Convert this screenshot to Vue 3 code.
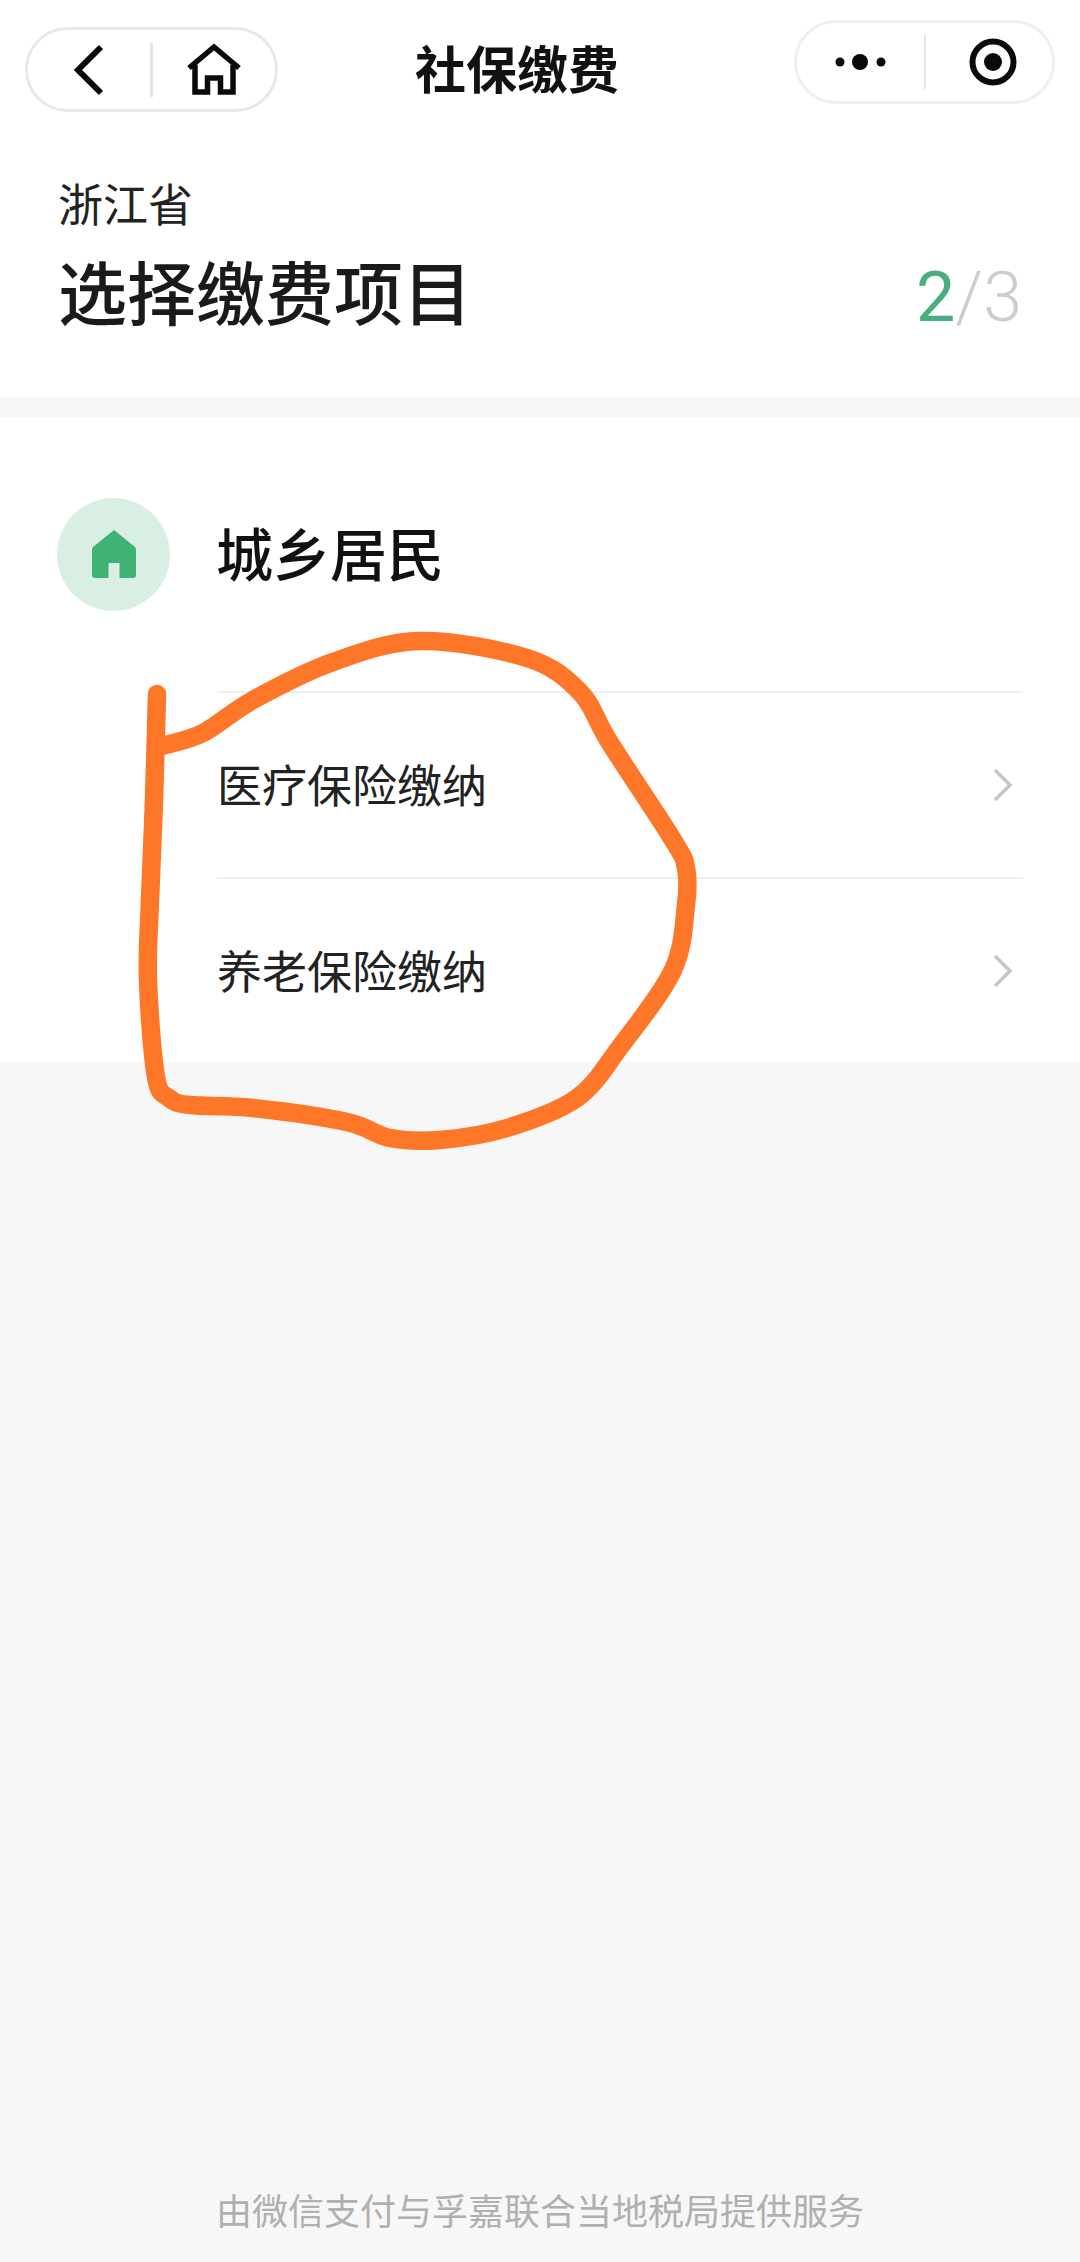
<template>
  <div class="page">
    <header class="head">
      <nav class="nav">
        <div class="capsule capsule-left">
          <span class="cell">
            <svg width="34" height="54" viewBox="0 0 34 54">
              <path d="M29 4 L6 27 L29 50" fill="none" stroke="#0a0a0a" stroke-width="6" />
            </svg>
          </span>
          <i class="sep"></i>
          <span class="cell">
            <svg width="56" height="54" viewBox="0 0 56 54">
              <path d="M3 25 L28 4 L53 25" fill="none" stroke="#0a0a0a" stroke-width="5.5" />
              <path d="M9 22 V49 H21.500 V35 H34.500 V49 H47 V22" fill="none" stroke="#0a0a0a" stroke-width="5.500" />
            </svg>
          </span>
        </div>
        <div class="nav-title">社保缴费</div>
        <div class="capsule capsule-right">
          <span class="cell cell-dots">
            <svg width="54" height="20" viewBox="0 0 54 20">
              <circle cx="6" cy="10" r="4.500" fill="#0a0a0a" />
              <circle cx="26" cy="10" r="8" fill="#0a0a0a" />
              <circle cx="47" cy="10" r="4.500" fill="#0a0a0a" />
            </svg>
          </span>
          <i class="sep sep-thin"></i>
          <span class="cell cell-target">
            <svg width="48" height="48" viewBox="0 0 48 48">
              <circle cx="24" cy="24" r="20.500" fill="none" stroke="#0a0a0a" stroke-width="6" />
              <circle cx="24" cy="24" r="9" fill="#0a0a0a" />
            </svg>
          </span>
        </div>
      </nav>

      <div class="province">浙江省</div>
      <div class="title-row">
        <h1>选择缴费项目</h1>
        <div class="steps"><b>2</b><span>/3</span></div>
      </div>
    </header>

    <section class="group">
      <div class="group-head">
        <div class="badge">
          <svg width="46" height="50" viewBox="0 0 46 50">
            <path
              d="M23 1 L44 18 Q45 19 45 21 V46 Q45 49 42 49 H28.500 V34 H17.500 V49 H4 Q1 49 1 46 V21 Q1 19 2 18 Z"
              fill="#3fb373"
            />
          </svg>
        </div>
        <div class="group-name">城乡居民</div>
      </div>
      <div class="row" v-for="item in items" :key="item">
        <span>{{ item }}</span>
        <svg width="22" height="36" viewBox="0 0 22 36">
          <path d="M3 3 L18 18 L3 33" fill="none" stroke="#c6c6c6" stroke-width="3.500" />
        </svg>
      </div>
    </section>

    <footer class="foot">由微信支付与孚嘉联合当地税局提供服务</footer>

    <svg class="scribble" width="1080" height="2262" viewBox="0 0 1080 2262">
      <path :d="scribble" fill="none" stroke="#fe7729" stroke-width="18.500" stroke-linecap="round" stroke-linejoin="round" />
    </svg>
  </div>
</template>

<script setup>
const items = ["医疗保险缴纳", "养老保险缴纳"];

// hand drawn loop, traced from the screenshot
const points = [
  [157, 694], [154, 800], [150, 900], [148, 980], [156, 1077],
  [169, 1098], [190, 1105], [253, 1108], [347, 1122],
  [390, 1138], [440, 1140], [507, 1128], [577, 1098],
  [620, 1047], [673, 970], [686, 905],
  [686, 868], [673, 840], [610, 743],
  [580, 692], [527, 658], [420, 641],
  [333, 662], [253, 700], [203, 733],
  [162, 746],
];

function smooth(pts) {
  let d = `M${pts[0][0]} ${pts[0][1]}`;
  for (let i = 0; i < pts.length - 1; i++) {
    const p0 = pts[i - 1] || pts[i];
    const p1 = pts[i];
    const p2 = pts[i + 1];
    const p3 = pts[i + 2] || p2;
    const c1x = p1[0] + (p2[0] - p0[0]) / 6;
    const c1y = p1[1] + (p2[1] - p0[1]) / 6;
    const c2x = p2[0] - (p3[0] - p1[0]) / 6;
    const c2y = p2[1] - (p3[1] - p1[1]) / 6;
    d += ` C${c1x} ${c1y} ${c2x} ${c2y} ${p2[0]} ${p2[1]}`;
  }
  return d;
}

const scribble = smooth(points);
</script>

<style>
body {
  background: #f7f7f7;
}
</style>

<style scoped>
.page {
  position: relative;
  width: 1080px;
  height: 2262px;
  overflow: hidden;
  display: flex;
  flex-direction: column;
  background: #f7f7f7;
  font-family: "Liberation Sans", "Noto Sans CJK SC", sans-serif;
  color: #111;
}

.head {
  height: 397px;
  background: #fff;
  box-sizing: border-box;
  padding: 20px 25px 0;
}

.nav {
  display: flex;
  align-items: flex-start;
  height: 122px;
}

.capsule {
  box-sizing: border-box;
  display: flex;
  align-items: center;
  border: 3px solid #e8e8e8;
  border-radius: 44px;
  background: #fff;
}

.capsule-left {
  width: 253px;
  height: 85px;
  margin-top: 7px;
}

.capsule-right {
  width: 261px;
  height: 84px;
  margin-left: auto;
  border-color: #efefef;
}

.cell {
  flex: 1;
  display: flex;
  align-items: center;
  justify-content: center;
}

.cell-dots {
  flex: none;
  width: 127px;
}

.cell-target {
  padding-left: 7px;
}

.sep {
  width: 3px;
  height: 54px;
  background: #e4e4e4;
}

.sep-thin {
  width: 2px;
}

.nav-title {
  margin: 22px 0 0 137px;
  font-size: 51px;
  line-height: 60px;
  font-weight: 700;
  color: #111;
}

.province {
  margin: 35px 0 0 33px;
  font-size: 45px;
  line-height: 60px;
  color: #222;
}

.title-row {
  display: flex;
  align-items: center;
  justify-content: space-between;
  margin: 20px 0 0 33px;
  padding-right: 33px;
  height: 80px;
}

h1 {
  margin: 0;
  font-size: 69px;
  line-height: 80px;
  font-weight: 500;
  color: #1a1a1a;
}

.steps {
  font-family: Roboto, "Liberation Sans", sans-serif;
  font-size: 70px;
  line-height: 80px;
}

.steps b {
  font-weight: 400;
  color: #4bae7f;
}

.steps span {
  font-weight: 300;
  color: #cdcdcd;
}

.group {
  margin-top: 20px;
  height: 645px;
  background: #fff;
}

.group-head {
  display: flex;
  align-items: center;
  gap: 46px;
  height: 274px;
  box-sizing: border-box;
  padding: 0 0 0 57px;
}

.badge {
  width: 113px;
  height: 113px;
  border-radius: 50%;
  background: #d9efe4;
  display: flex;
  align-items: center;
  justify-content: center;
}

.group-name {
  margin-top: 4px;
  font-size: 57px;
  line-height: 70px;
  font-weight: 500;
}

.row {
  display: flex;
  align-items: center;
  justify-content: space-between;
  box-sizing: border-box;
  height: 186px;
  margin: 0 57px 0 217px;
  padding-right: 9px;
  border-top: 2px solid #efefef;
  font-size: 45px;
  color: #222;
}

.row span {
  margin-bottom: 3px;
}

.foot {
  margin-top: auto;
  padding-bottom: 27px;
  text-align: center;
  font-size: 36px;
  line-height: 44px;
  color: #b0b0b0;
}

.scribble {
  position: absolute;
  left: 0;
  top: 0;
  pointer-events: none;
}
</style>
